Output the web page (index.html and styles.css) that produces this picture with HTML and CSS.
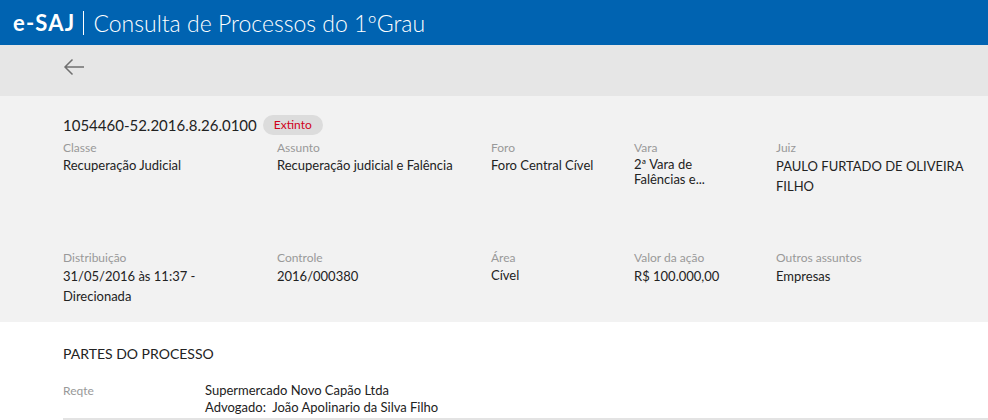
FILE: index.html
```html
<!DOCTYPE html>
<html lang="pt-BR">
<head>
<meta charset="utf-8">
<title>e-SAJ | Consulta de Processos do 1ºGrau</title>
<link rel="stylesheet" href="styles.css">
</head>
<body>
<header class="topbar">
  <span class="brand">e-SAJ</span>
  <span class="divider"></span>
  <span class="title">Consulta de Processos do 1ºGrau</span>
</header>
<nav class="toolbar">
  <a class="back" href="#" aria-label="Voltar">
    <svg width="22" height="18" viewBox="0 0 22 18"><path d="M21 9H2M9.5 1.5L2 9l7.5 7.5" fill="none" stroke="#707070" stroke-width="1.5"/></svg>
  </a>
</nav>
<section class="summary">
  <div class="proc-head">
    <span class="proc-number">1054460-52.2016.8.26.0100</span>
    <span class="badge">Extinto</span>
  </div>
  <div class="grid row1">
    <div class="field"><div class="label">Classe</div><div class="value">Recuperação Judicial</div></div>
    <div class="field"><div class="label">Assunto</div><div class="value">Recuperação judicial e Falência</div></div>
    <div class="field"><div class="label">Foro</div><div class="value">Foro Central Cível</div></div>
    <div class="field"><div class="label">Vara</div><div class="value compact">2ª Vara de<br>Falências e...</div></div>
    <div class="field"><div class="label">Juiz</div><div class="value tall">PAULO FURTADO DE OLIVEIRA FILHO</div></div>
  </div>
  <div class="grid row2">
    <div class="field"><div class="label">Distribuição</div><div class="value tall">31/05/2016 às 11:37 - Direcionada</div></div>
    <div class="field"><div class="label">Controle</div><div class="value tall">2016/000380</div></div>
    <div class="field"><div class="label">Área</div><div class="value area">Cível</div></div>
    <div class="field"><div class="label">Valor da ação</div><div class="value tall">R$ 100.000,00</div></div>
    <div class="field"><div class="label">Outros assuntos</div><div class="value tall">Empresas</div></div>
  </div>
</section>
<section class="parts">
  <h2 class="parts-title">PARTES DO PROCESSO</h2>
  <div class="part-row">
    <div class="part-type">Reqte</div>
    <div class="part-names">
      <div>Supermercado Novo Capão Ltda</div>
      <div>Advogado:&nbsp; João Apolinario da Silva Filho</div>
    </div>
  </div>
</section>
</body>
</html>
```
FILE: styles.css
```css
* { box-sizing: border-box; }
html, body { margin: 0; padding: 0; }
body {
  font-family: "Lato", "Open Sans", sans-serif;
  color: #333;
  background: #fff;
  width: 988px;
  overflow: hidden;
}
.topbar {
  height: 45px;
  background: #0063b1;
  color: #fff;
  display: flex;
  align-items: center;
  padding-left: 13px;
}
.brand {
  font-weight: 700;
  font-size: 22px;
  letter-spacing: 1.2px;
}
.divider {
  width: 1px;
  height: 24px;
  background: #fff;
  margin: 0 9px 0 8px;
}
.title {
  font-weight: 300;
  font-size: 23px;
}
.toolbar {
  height: 51px;
  background: #e6e6e6;
  display: flex;
  align-items: center;
  padding-left: 63px;
}
.back { display: flex; margin-top: -8px; }
.summary {
  background: #f2f2f2;
  height: 226px;
  padding: 18px 0 0 63px;
}
.proc-head {
  display: flex;
  align-items: center;
  gap: 6px;
  height: 22px;
}
.proc-number { font-size: 15px; color: #222; }
.badge {
  background: #dcdcdc;
  color: #d0021b;
  font-size: 12px;
  border-radius: 10px;
  padding: 2px 11px;
  line-height: 16px;
}
.grid {
  display: grid;
  grid-template-columns: 214px 214px 143px 142px 200px;
}
.grid .field { padding-right: 30px; }
.grid .field:last-child { padding-right: 0; }
.row1 { margin-top: 4px; height: 110px; }
.label {
  font-size: 12px;
  color: #999;
  line-height: 16px;
}
.value {
  font-size: 13px;
  color: #222;
  line-height: 18px;
}
.value.compact { line-height: 15px; margin-top: 1px; }
.value.tall { line-height: 20px; }
.value.area { line-height: 18px; }
.parts { padding: 22px 0 0 63px; }
.parts-title {
  margin: 0;
  font-size: 14px;
  font-weight: 400;
  color: #222;
  line-height: 20px;
}
.part-row {
  display: flex;
  margin-top: 18px;
  padding-bottom: 2px;
  border-bottom: 2px solid #e3e3e3;
}
.part-type {
  width: 142px;
  font-size: 12px;
  color: #999;
  line-height: 17px;
}
.part-names {
  font-size: 13px;
  color: #222;
  line-height: 17px;
}
```
